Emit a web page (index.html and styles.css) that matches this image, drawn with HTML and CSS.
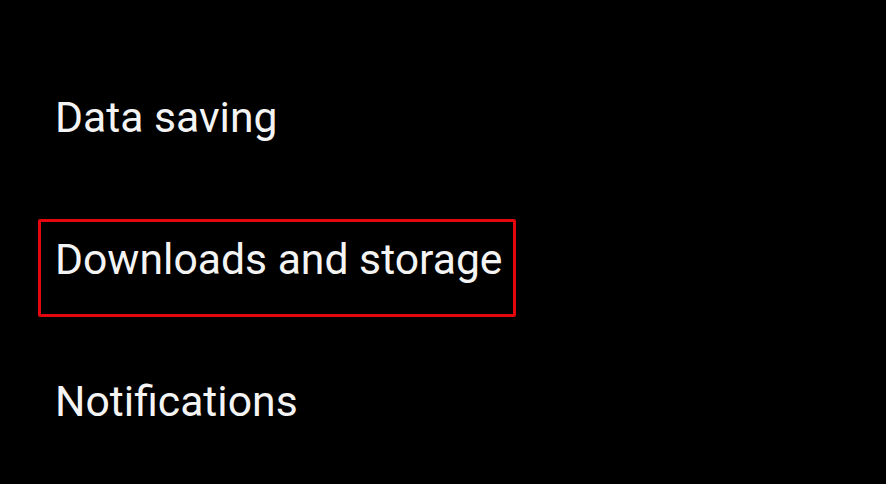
FILE: index.html
```html
<!DOCTYPE html>
<html>
<head>
<meta charset="utf-8">
<link rel="stylesheet" href="styles.css">
</head>
<body>
<ul class="menu">
  <li class="item">Data saving</li>
  <li class="item selected">Downloads and storage</li>
  <li class="item">Notifications</li>
</ul>
</body>
</html>
```
FILE: styles.css
```css
html, body {
  margin: 0;
  padding: 0;
  background: #000;
  width: 886px;
  height: 484px;
  overflow: hidden;
}
.menu {
  list-style: none;
  margin: 0;
  padding: 77px 0 0 38px;
  display: flex;
  flex-direction: column;
  align-items: flex-start;
  gap: 44px;
}
.item {
  box-sizing: border-box;
  height: 98px;
  border: 3px solid transparent;
  padding: 13px 10px 0 14px;
  font-family: Roboto, "Noto Sans", sans-serif;
  font-size: 42.7px;
  line-height: 49px;
  color: #f4f4f4;
  white-space: nowrap;
}
.selected {
  border-color: #e4080e;
  border-radius: 2px;
}
```
